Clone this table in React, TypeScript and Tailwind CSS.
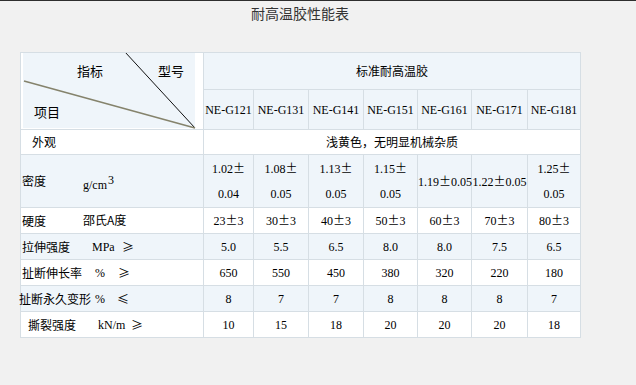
import React from 'react';

const cjk = "font-['SimSun','Noto_Sans_CJK_SC',sans-serif]";
const serif = "font-['Liberation_Serif','Noto_Sans_CJK_SC',serif]";

const models = ['NE-G121', 'NE-G131', 'NE-G141', 'NE-G151', 'NE-G161', 'NE-G171', 'NE-G181'];
const widths = [183, 50, 55, 55, 54, 54, 56, 53];

// the ± sign comes from the CJK font, as in the original page
const pm = (s: string) => {
  const parts = s.split('±');
  return parts.map((p, i) => (
    <React.Fragment key={i}>
      {p}
      {i < parts.length - 1 && <span className={cjk}>±</span>}
    </React.Fragment>
  ));
};

type Row = {
  name: string;
  nameX: number;
  unit?: React.ReactNode;
  unitX?: number;
  sym?: string;
  symX?: number;
  values: React.ReactNode[];
  blue: boolean;
  h: string;
};

const two = (a: string, b: string) => (
  <span className="block leading-[25px]">
    {pm(a)}
    <br />
    {b}
  </span>
);

const rows: Row[] = [
  {
    name: '密度',
    nameX: 22,
    unit: (
      <span className="relative top-[4px]">
        g/cm<sup className="relative -top-[5px] text-[12px] ml-[1px]">3</sup>
      </span>
    ),
    unitX: 83,
    values: [two('1.02±', '0.04'), two('1.08±', '0.05'), two('1.13±', '0.05'), two('1.15±', '0.05'), pm('1.19±0.05'), pm('1.22±0.05'), two('1.25±', '0.05')],
    blue: true,
    h: 'h-[51px]',
  },
  { name: '硬度', nameX: 22, unit: <span className={cjk}>邵氏A度</span>, unitX: 83, values: ['23±3', '30±3', '40±3', '50±3', '60±3', '70±3', '80±3'].map(pm), blue: false, h: 'h-[26px]' },
  { name: '拉伸强度', nameX: 22, unit: 'MPa', unitX: 92, sym: '≥', symX: 122, values: ['5.0', '5.5', '6.5', '8.0', '8.0', '7.5', '6.5'], blue: true, h: 'h-[26px]' },
  { name: '扯断伸长率', nameX: 22, unit: '%', unitX: 95, sym: '≥', symX: 118, values: ['650', '550', '450', '380', '320', '220', '180'], blue: false, h: 'h-[26px]' },
  { name: '扯断永久变形', nameX: 19, unit: '%', unitX: 95, sym: '≤', symX: 117, values: ['8', '7', '7', '8', '8', '8', '7'], blue: true, h: 'h-[26px]' },
  { name: '撕裂强度', nameX: 28, unit: 'kN/m', unitX: 98, sym: '≥', symX: 131, values: ['10', '15', '18', '20', '20', '20', '18'], blue: false, h: 'h-[26px]' },
];

const cell = 'border border-[#d6dee4] p-0';

function Label({ r }: { r: Row }) {
  return (
    <div className="flex items-center whitespace-nowrap text-[12px]">
      <span className={cjk} style={{ marginLeft: r.nameX - 21, width: (r.unitX ?? 0) - r.nameX }}>
        {r.name}
      </span>
      <span className={serif} style={{ width: r.symX ? r.symX - (r.unitX ?? 0) : undefined }}>
        {r.unit}
      </span>
      {r.sym && <span className={cjk}>{r.sym}</span>}
    </div>
  );
}

export default function App() {
  return (
    <div className="min-h-[385px] bg-[#f1f1f1] border-t border-[#2e2e2e]">
      <div className="w-[560px] ml-[20px]">
        <div className={`h-[51px] pt-[4px] text-center text-[14px] leading-[16px] text-[#333] ${cjk}`}>耐高温胶性能表</div>
        <table className="table-fixed border-collapse w-[560px] text-[12px] text-black">
          <colgroup>
            {widths.map((w, i) => (
              <col key={i} style={{ width: w }} />
            ))}
          </colgroup>
          <tbody>
            <tr className="h-[37px]">
              <td rowSpan={2} className={`${cell} bg-white align-top`}>
                <div className="relative w-[182px] h-[76px]">
                  <div className="absolute left-[2px] top-0 w-[172px] h-[75px] bg-[#eff5fa]" />
                  <svg className="absolute inset-0" width="182" height="76" viewBox="0 0 182 76">
                    <line x1="104" y1="-1" x2="174" y2="75" stroke="#111" strokeWidth="1" />
                    <line x1="3" y1="28" x2="174" y2="75" stroke="#85836c" strokeWidth="1.6" />
                  </svg>
                  <span className={`absolute left-[56px] top-[8px] text-[13px] ${cjk}`}>指标</span>
                  <span className={`absolute left-[137px] top-[8px] text-[13px] ${cjk}`}>型号</span>
                  <span className={`absolute left-[13px] top-[49px] text-[13px] ${cjk}`}>项目</span>
                </div>
              </td>
              <td colSpan={7} className={`${cell} bg-[#eff5fa] text-center ${cjk}`}>
                标准耐高温胶
              </td>
            </tr>
            <tr className="h-[40px] bg-[#eff5fa]">
              {models.map((m) => (
                <td key={m} className={`${cell} text-center whitespace-nowrap ${serif}`}>
                  {m}
                </td>
              ))}
            </tr>
            <tr className="h-[25px] bg-white">
              <td className={`${cell} pl-[11px] ${cjk}`}>外观</td>
              <td colSpan={7} className={`${cell} text-center ${cjk}`}>
                浅黄色，无明显机械杂质
              </td>
            </tr>
            {rows.map((r) => (
              <tr key={r.name} className={`${r.h} ${r.blue ? 'bg-[#eff5fa]' : 'bg-white'}`}>
                <td className={cell}>
                  <Label r={r} />
                </td>
                {r.values.map((v, i) => (
                  <td key={i} className={`${cell} text-center whitespace-nowrap ${serif}`}>
                    {v}
                  </td>
                ))}
              </tr>
            ))}
          </tbody>
        </table>
      </div>
    </div>
  );
}
